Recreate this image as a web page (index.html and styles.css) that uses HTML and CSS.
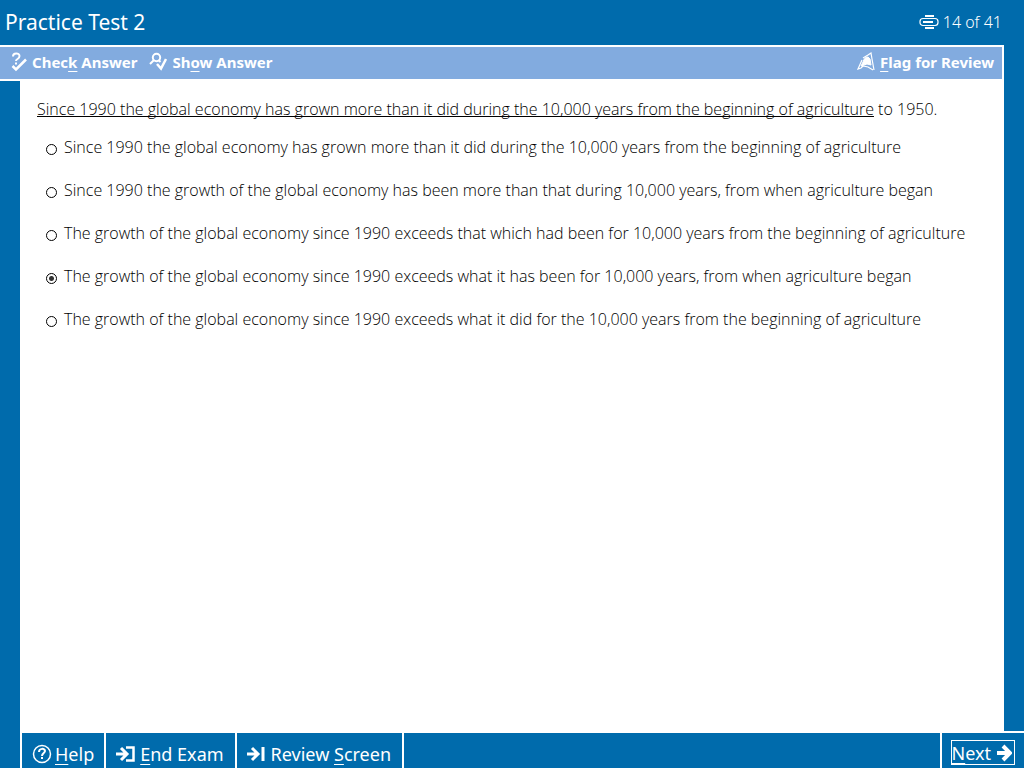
FILE: index.html
```
<!DOCTYPE html>

<html lang="en">

<head>
    <meta charset="UTF-8">
    <title>Practice Test 2</title>
    <link rel="stylesheet" href="styles.css">
</head>

<body>
    <header class="title-bar">
        <h1>Practice Test 2</h1>
        <div class="progress">
            <svg class="icon" width="20" height="16" viewBox="0 0 20 16" fill="none" stroke="currentColor">
                <path d="M6 2h9M6 14h9" stroke-width="2"/>
                <rect x="1" y="4.5" width="18" height="7" rx="3" stroke-width="1.2"/>
                <path d="M4 8h10" stroke-width="2"/>
            </svg>
            <span>14 of 41</span>
        </div>
    </header>
    <nav class="toolbar">
        <button type="button" class="tool">
            <svg class="icon" width="16" height="20" viewBox="0 0 16 20" fill="none" stroke="currentColor" stroke-width="2">
                <path d="M2 4.5C2 0.5 8.5 0.5 8.5 4S5 6.5 5 9M5 10.5v2"/>
                <path d="M1.5 14L5 17.5 15 7.5" stroke-width="2.5"/>
            </svg>
            <span>Chec<u>k</u> Answer</span>
        </button>
        <button type="button" class="tool">
            <svg class="icon" width="18" height="20" viewBox="0 0 18 20" fill="none" stroke="currentColor" stroke-width="2">
                <circle cx="7.5" cy="5.5" r="3.7"/>
                <path d="M5 8L1 12M9.5 8l2 2"/>
                <path d="M8 12l4 4.5L17 7" stroke-width="2.5"/>
            </svg>
            <span>Sh<u>o</u>w Answer</span>
        </button>
        <button type="button" class="tool flag">
            <svg class="icon" width="18" height="20" viewBox="0 0 18 20" fill="none" stroke="currentColor">
                <path d="M11 5C8 5 7 7 6 10l-2 4 6-2 4 1-1-6z" fill="currentColor"/>
                <path d="M5 8L1 17l3-1 2-2 5 1 5 3" stroke-width="1.2"/>
                <path d="M6 6l5-3 3-2 1 6 2 11" stroke-width="1.2"/>
            </svg>
            <span><u>F</u>lag for Review</span>
        </button>
    </nav>
    <main class="question">
        <p class="prompt" id="prompt"><span class="underlined">Since 1990 the global economy has grown more than it did during the 10,000 years from the beginning of agriculture</span> to 1950.</p>
        <div class="choices" role="radiogroup" aria-labelledby="prompt">
            <label class="choice"><input type="radio" name="answer"><span>Since 1990 the global economy has grown more than it did during the 10,000 years from the beginning of agriculture</span></label>
            <label class="choice"><input type="radio" name="answer"><span>Since 1990 the growth of the global economy has been more than that during 10,000 years, from when agriculture began</span></label>
            <label class="choice"><input type="radio" name="answer"><span>The growth of the global economy since 1990 exceeds that which had been for 10,000 years from the beginning of agriculture</span></label>
            <label class="choice"><input type="radio" name="answer" checked><span>The growth of the global economy since 1990 exceeds what it has been for 10,000 years, from when agriculture began</span></label>
            <label class="choice"><input type="radio" name="answer"><span>The growth of the global economy since 1990 exceeds what it did for the 10,000 years from the beginning of agriculture</span></label>
        </div>
    </main>
    <footer class="bottom-bar">
        <button type="button" class="nav-button">
            <svg class="icon" width="20" height="20" viewBox="0 0 20 20" fill="none" stroke="currentColor" stroke-width="2">
                <circle cx="10" cy="10" r="8.5" stroke-width="1.5"/>
                <path d="M7 8c0-4 6-4 6-1 0 2-3 2-3 5M10 13v2"/>
            </svg>
            <span><u>H</u>elp</span>
        </button>
        <button type="button" class="nav-button">
            <svg class="icon" width="20" height="16" viewBox="0 0 20 16" fill="none" stroke="currentColor" stroke-width="3">
                <path d="M0 8h11M5 2l6 6-6 6"/>
                <path d="M10 1.5h7.500v13H10" stroke-width="2.5"/>
            </svg>
            <span><u>E</u>nd Exam</span>
        </button>
        <button type="button" class="nav-button">
            <svg class="icon" width="20" height="16" viewBox="0 0 20 16" fill="none" stroke="currentColor" stroke-width="3">
                <path d="M0 8h10M5 2l6 6-6 6M16 1v14"/>
            </svg>
            <span>Review <u>S</u>creen</span>
        </button>
        <div class="next-area">
            <button type="button" class="next">
                <span><u>N</u>ext</span>
                <svg class="icon" width="16" height="18" viewBox="0 0 16 18" fill="none" stroke="currentColor" stroke-width="4">
                    <path d="M1 9h12M7 2l7 7-7 7"/>
                </svg>
            </button>
        </div>
    </footer>
</body>

</html>
```
FILE: styles.css
```
* {
    box-sizing: border-box;
}

body {
    margin: 0;
    min-height: 100vh;
    display: flex;
    flex-direction: column;
    background-color: #006bac; /* Exam frame blue */
    color: #000;
    font-family: "Noto Sans", Tahoma, sans-serif;
    font-size: 16px;
}

button {
    display: flex;
    align-items: center;
    padding: 0;
    border: none;
    background: none;
    color: #fff;
    font: inherit;
    cursor: pointer;
}

u {
    text-underline-offset: 3px;
    text-decoration-thickness: 1px;
}

.icon {
    flex: none;
}

.title-bar {
    display: flex;
    align-items: center;
    justify-content: space-between;
    height: 45px;
    padding: 0 22px 2px 5px;
    color: #fff;
}

.title-bar h1 {
    margin: 0;
    font-size: 21px;
    font-weight: normal;
    line-height: 24px;
}

.progress {
    display: flex;
    align-items: center;
    gap: 4px;
    font-weight: 300;
}

.toolbar {
    display: flex;
    align-items: center;
    gap: 12px;
    height: 36px;
    margin-right: 20px;
    padding: 0 8px 2px 11px;
    border: solid #fff;
    border-width: 2px 2px 2px 0;
    background-color: #82abdf; /* Light blue toolbar */
}

.tool {
    gap: 5px;
    font-size: 15px;
    font-weight: 700;
}

.flag {
    margin-left: auto;
}

.question {
    flex: 1;
    margin: 0 20px;
    padding: 18px 17px;
    background-color: #fff;
    font-family: "Open Sans", Tahoma, sans-serif;
    font-weight: 300;
}

.prompt {
    margin: 0;
    line-height: 20px;
}

.underlined {
    text-decoration: underline;
    text-decoration-thickness: 1px;
    text-decoration-skip-ink: none; /* Keep the line unbroken under descenders */
}

.choices {
    display: flex;
    flex-direction: column;
    gap: 23px;
    margin-top: 18px;
}

.choice {
    display: flex;
    align-items: center;
    gap: 7px;
    padding-left: 9px;
    line-height: 20px;
}

.choice input {
    appearance: none;
    flex: none;
    width: 11px;
    height: 11px;
    margin: 5px 0 0;
    border: 1px solid #000;
    border-radius: 50%;
}

.choice input:checked {
    background: radial-gradient(#333 0 2px, #fff 3px);
}

.bottom-bar {
    display: flex;
    height: 37px;
    margin-left: 20px;
    border-top: 2px solid #fff;
    border-left: 2px solid #fff;
    font-size: 18px;
}

.nav-button {
    gap: 4px;
    padding: 6px 11px 0 10px;
    border-right: 2px solid #fff;
}

.nav-button:first-child {
    gap: 3px;
    padding-right: 10px;
}

.next-area {
    display: flex;
    align-items: center;
    margin-left: auto;
    padding: 4px 9px 0;
    border-left: 2px solid #fff;
}

.next {
    gap: 5px;
    height: 25px;
    padding: 0 2px 0 0;
    border: 1px solid #fff;
}
```
